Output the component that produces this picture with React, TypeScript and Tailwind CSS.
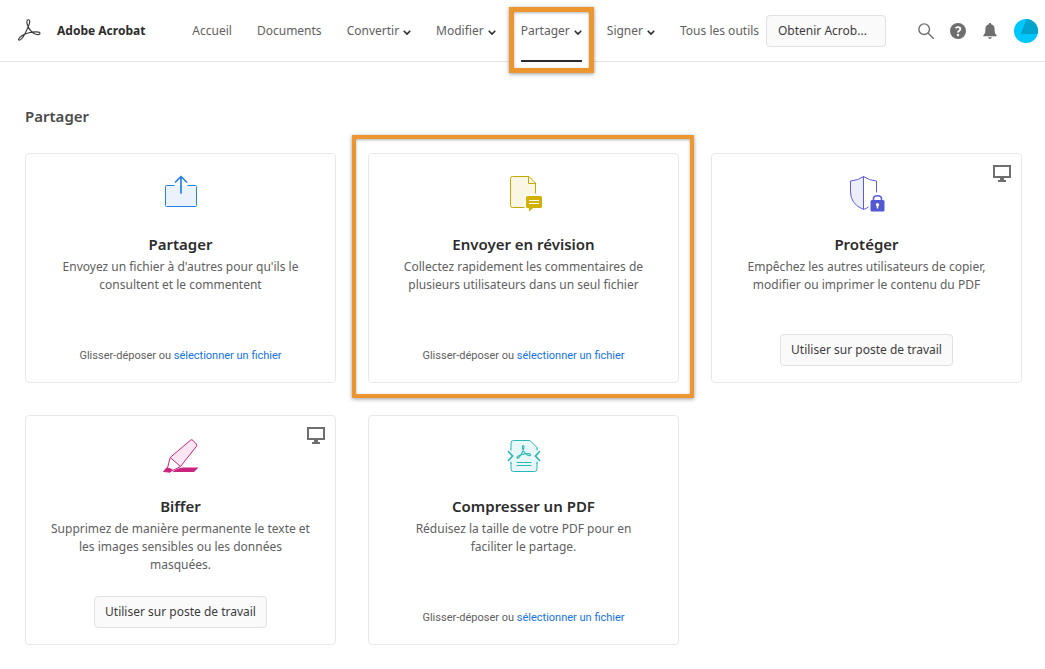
import React from 'react';

interface NavItem {
  label: string;
  hasMenu?: boolean;
  active?: boolean;
}

interface Tool {
  title: string;
  description: string;
  icon: React.ReactNode;
  desktop?: boolean;
  highlighted?: boolean;
}

const AcrobatLogo = () => (
  <svg className="size-6 shrink-0" viewBox="-1 1 25 25" fill="none" stroke="#3a3a3a" strokeWidth="1.2" aria-hidden="true">
    <path d="M10.7 1.8C8.9 1.8 9 5 10 7.5C11.5 11.5 14.5 15.2 18 16.6C20.5 17.5 23 17.6 23 15.9C23 14 17 13.9 11.5 15.3C6 16.7 .6 20 .6 22.2C.6 24.2 4 22.8 7 16.8C9.5 12 12.2 7 12.3 3.7C12.3 2.4 11.8 1.8 10.7 1.8Z" />
  </svg>
);

const ChevronIcon = () => (
  <svg className="w-2 h-2 mt-1" viewBox="0 0 8 8" fill="none" stroke="#2c2c2c" strokeWidth="1.6" strokeLinecap="round" aria-hidden="true">
    <path d="M1.2 2.2L4 5L6.8 2.2" />
  </svg>
);

const SearchIcon = () => (
  <svg className="size-4" viewBox="0 0 16 16" fill="none" stroke="#6e6e6e" strokeWidth="1.4" strokeLinecap="round" aria-hidden="true">
    <circle cx="6.2" cy="6.2" r="5.3" />
    <path d="M10.2 10.2L15.3 15.3" />
  </svg>
);

const HelpIcon = () => (
  <svg className="size-4" viewBox="0 0 16 16" aria-hidden="true">
    <circle cx="8" cy="8" r="8" fill="#6e6e6e" />
    <path d="M5.6 5.2C6.3 3.9 10.3 3.5 10.3 6C10.3 7.7 8 7.8 8 9.6" fill="none" stroke="#fff" strokeWidth="1.9" />
    <circle cx="8" cy="12" r="1.2" fill="#fff" />
  </svg>
);

const BellIcon = () => (
  <svg className="size-4" viewBox="0 0 16 16" fill="#6e6e6e" aria-hidden="true">
    <path d="M8 0C8.8 0 9.2.5 9.2 1.3C11.6 1.9 12.6 3.8 12.6 6C12.6 10 13.4 11 14.6 12.2C15 12.8 14.8 13.3 14.2 13.3H1.8C1.2 13.3 1 12.8 1.4 12.2C2.6 11 3.4 10 3.4 6C3.4 3.8 4.4 1.9 6.8 1.3C6.8.5 7.2 0 8 0Z" />
    <path d="M6.2 14.3H9.8C9.6 15.4 8.9 16 8 16C7.1 16 6.4 15.4 6.2 14.3Z" />
  </svg>
);

const Avatar = () => (
  <svg className="size-6" viewBox="0 0 24 24" aria-hidden="true">
    <circle cx="12" cy="12" r="12" fill="#00c8ff" />
    <path d="M12.6 0.02L6.6 15.2L23.6 14.9A12 12 0 0 0 12.6 0.02Z" fill="#00a3cc" />
  </svg>
);

const DesktopIcon = () => (
  <svg className="absolute top-[11px] right-[10px] w-[18px] h-[17px]" viewBox="0 0 18 17" fill="#6e6e6e" aria-hidden="true">
    <path fillRule="evenodd" d="M0 0H18V13H11V15H13V17H5V15H7V13H0ZM2 2V11H16V2Z" />
  </svg>
);

const ShareIcon = () => (
  <svg className="size-9" viewBox="0 0 36 36" fill="none" stroke="#2680eb" aria-hidden="true">
    <path d="M11.5 11.5H3.5Q2.5 11.5 2.5 12.5V31.5Q2.5 32.5 3.5 32.5H32.5Q33.5 32.5 33.5 31.5V12.5Q33.5 11.5 32.5 11.5H24.5" fill="#eaf2fb" />
    <path d="M18 19V3M12.5 8L18 2.5L23.5 8" strokeWidth="1.7" strokeLinecap="round" strokeLinejoin="round" />
  </svg>
);

const ReviewIcon = () => (
  <svg className="size-9 overflow-visible" viewBox="0 0 36 36" fill="none" stroke="#c9a800" aria-hidden="true">
    <path d="M30 19V9L23 2.5H6.5Q4.5 2.5 4.5 4.5V31.5Q4.5 33.5 6.5 33.5H18.5V20.5H30Z" fill="#f9f7e3" stroke="none" />
    <path d="M18.5 33.5H6.5Q4.5 33.5 4.5 31.5V4.5Q4.5 2.5 6.5 2.5H23L29.5 9V19.5M22.5 2.5V9.5H29.5" />
    <path d="M21.5 22H34.5Q36 22 36 23.5V32.5Q36 34 34.5 34H27L23 37.8V34H21.5Q20 34 20 32.5V23.5Q20 22 21.5 22Z" fill="#d2b200" stroke="none" />
    <path d="M23 26.5H33M23 29.5H33" stroke="#fff" />
  </svg>
);

const ProtectIcon = () => (
  <svg className="size-9 overflow-visible" viewBox="0 0 36 36" fill="none" stroke="#5c5ce0" aria-hidden="true">
    <path d="M14.5 2.5Q9 6.5 1.5 7V18Q1.5 30 14.5 35.5Z" fill="#eeeefb" />
    <path d="M14.5 2.5Q20 6.5 27.5 7V18.5M14.5 35.5Q17.5 34.5 19.5 33" />
    <path d="M24.5 27V24.5Q24.5 21.7 28.5 21.7Q32.5 21.7 32.5 24.5V27" strokeWidth="1.6" />
    <rect x="21.5" y="26" width="14" height="11.5" rx="1.5" fill="#5258d4" stroke="none" />
    <path d="M28.5 31V34.5" stroke="#fff" strokeWidth="1.5" />
    <circle cx="28.5" cy="30.7" r="1.7" fill="#fff" stroke="none" />
  </svg>
);

const RedactIcon = () => (
  <svg className="size-9 overflow-visible" viewBox="0 -2 36 36" fill="none" stroke="#c9257e" strokeLinejoin="round" aria-hidden="true">
    <path d="M7.2 19.5L27.5 2.2Q28.8 1.2 30 2.4L33.3 6Q34.2 7.2 33.3 8.5L17.5 28.5Z" fill="#fbe6f1" />
    <path d="M7.2 19.5L4.5 30L8.5 33L17.5 28.5" />
    <path d="M3.8 29.8L.5 33.5L7 34.2L9 31.5Z" fill="#c9257e" />
    <path d="M9.5 34C13 31 16 29.8 20 29.5H35.5L31 34Z" fill="#c9257e" stroke="none" />
  </svg>
);

const CompressIcon = () => (
  <svg className="size-9 overflow-visible" viewBox="0 -2 36 36" fill="none" stroke="#2bb8b8" aria-hidden="true">
    <path d="M5 12V5Q5 2.5 7.5 2.5H24L31 9.5V12M31 24V31Q31 33.5 28.5 33.5H7.5Q5 33.5 5 31V24" fill="#e8f7f7" />
    <rect x="5" y="10" width="26" height="15" fill="#e8f7f7" stroke="none" />
    <path d="M5 12.5V10M31 12.5V9.5M5 23.5V26M31 23.5V26" />
    <path d="M2 13L6.5 18L2 23M34 13L29.5 18L34 23" strokeWidth="1.7" />
    <path d="M17.3 7.6C15.8 7.6 16.3 11.3 18 13.7C19.5 16 21.7 17.6 23.5 17.6C25.2 17.6 25 15.7 22.5 15.6C18.5 15.4 11.2 17.4 11 19.4C11 21 13.2 20 15 16.8C16.8 13.6 19.2 7.6 17.3 7.6Z" strokeWidth="1.1" />
    <path d="M10.5 24.5H25.5M10.5 27.5H25.5" />
  </svg>
);

const navItems: NavItem[] = [
  { label: 'Accueil' },
  { label: 'Documents' },
  { label: 'Convertir', hasMenu: true },
  { label: 'Modifier', hasMenu: true },
  { label: 'Partager', hasMenu: true, active: true },
  { label: 'Signer', hasMenu: true },
  { label: 'Tous les outils' },
];

const tools: Tool[] = [
  {
    title: 'Partager',
    description: "Envoyez un fichier à d'autres pour qu'ils le\nconsultent et le commentent",
    icon: <ShareIcon />,
  },
  {
    title: 'Envoyer en révision',
    description: 'Collectez rapidement les commentaires de\nplusieurs utilisateurs dans un seul fichier',
    icon: <ReviewIcon />,
    highlighted: true,
  },
  {
    title: 'Protéger',
    description: 'Empêchez les autres utilisateurs de copier,\nmodifier ou imprimer le contenu du PDF',
    icon: <ProtectIcon />,
    desktop: true,
  },
  {
    title: 'Biffer',
    description: 'Supprimez de manière permanente le texte et\nles images sensibles ou les données\nmasquées.',
    icon: <RedactIcon />,
    desktop: true,
  },
  {
    title: 'Compresser un PDF',
    description: 'Réduisez la taille de votre PDF pour en\nfaciliter le partage.',
    icon: <CompressIcon />,
  },
];

const NavEntry: React.FC<{ item: NavItem }> = ({ item }) => {
  if (!item.hasMenu) {
    return <a href="#" className="whitespace-nowrap">{item.label}</a>;
  }
  return (
    <div className="relative flex items-center h-full">
      {item.active && (
        <span className="absolute top-[7px] -bottom-3 -inset-x-3 bg-white border-5 border-[#ec962f] shadow-[0_1px_4px_rgba(0,0,0,0.4),inset_0_1px_3px_rgba(0,0,0,0.3)]" />
      )}
      <button type="button" className="relative flex items-center gap-1 h-full whitespace-nowrap">
        {item.label}
        <ChevronIcon />
        {item.active && <span className="absolute -bottom-px inset-x-0 h-0.5 bg-[#2c2c2c]" />}
      </button>
    </div>
  );
};

const Header = () => (
  <header className="flex items-center h-[62px] pl-[17px] pr-[7px] border-b border-[#e4e4e4]">
    <AcrobatLogo />
    <span className="ml-4 font-bold text-[#2c2c2c] whitespace-nowrap">Adobe Acrobat</span>
    <nav className="flex items-center gap-[25px] h-full ml-[47px] text-[#606060]">
      {navItems.map((item) => (
        <NavEntry key={item.label} item={item} />
      ))}
    </nav>
    <div className="flex items-center ml-auto">
      <button type="button" className="w-[120px] h-8 px-[11px] text-left text-[#3c3c3c] bg-[#fafafa] border border-[#e1e1e1] rounded">
        Obtenir Acrob...
      </button>
      <div className="flex items-center gap-4 ml-8">
        <button type="button" aria-label="Rechercher"><SearchIcon /></button>
        <button type="button" aria-label="Aide"><HelpIcon /></button>
        <button type="button" aria-label="Notifications"><BellIcon /></button>
        <button type="button" aria-label="Compte"><Avatar /></button>
      </div>
    </div>
  </header>
);

const ToolCard: React.FC<{ tool: Tool }> = ({ tool }) => (
  <article className="relative flex flex-col items-center min-h-[230px] pt-[18px] pb-4 text-center border border-[#e8e8e8] rounded">
    {tool.highlighted && (
      <span className="absolute -top-[19px] -bottom-4 -left-[17px] -right-4 border-4 border-[#ec962f] pointer-events-none shadow-[0_1px_4px_rgba(0,0,0,0.4),inset_0_1px_3px_rgba(0,0,0,0.3)]" />
    )}
    {tool.desktop && <DesktopIcon />}
    <div className="flex items-center h-10">{tool.icon}</div>
    <h2 className="mt-5 text-[15px] leading-6 font-semibold text-[#2c2c2c]">{tool.title}</h2>
    <p className="mt-0.5 leading-[18px] text-[#606060] whitespace-pre-line">{tool.description}</p>
    {tool.desktop ? (
      <button type="button" className="h-8 mt-auto px-[10px] text-[#3c3c3c] bg-[#fafafa] border border-[#e1e1e1] rounded">
        Utiliser sur poste de travail
      </button>
    ) : (
      <p className="mt-auto font-['Roboto',sans-serif] text-[11px] leading-5 text-[#606060]">
        Glisser-déposer ou <a href="#" className="text-[#1473e6]">sélectionner un fichier</a>
      </p>
    )}
  </article>
);

export default function App() {
  return (
    <div className="min-h-screen bg-white font-['Noto_Sans',sans-serif] text-xs">
      <Header />
      <main className="pt-[42px] pl-[25px] pr-[23px] pb-6">
        <h1 className="text-[15px] leading-6 font-semibold text-[#4b4b4b]">Partager</h1>
        <div className="grid grid-cols-3 gap-8 mt-[25px]">
          {tools.map((tool) => (
            <ToolCard key={tool.title} tool={tool} />
          ))}
        </div>
      </main>
    </div>
  );
}
